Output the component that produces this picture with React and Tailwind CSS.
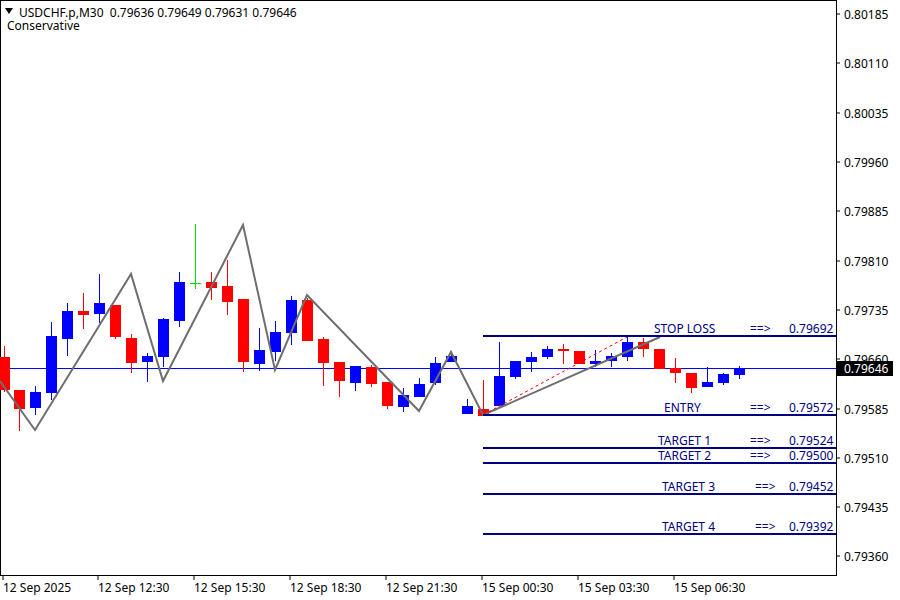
const C=[
[4,'r',357,390,346,392],[19,'r',390,409,390,431],[35,'b',392,408,386,415],[51,'b',336,393,322,400],
[67,'b',311,339,303,356],[83,'r',311,315,293,329],[99,'b',303,314,274,323],[115,'r',305,337,305,339],
[131,'r',338,363,334,373],[147,'b',356,362,353,382],[163,'b',319,357,318,367],[179,'b',282,321,272,327],
[195,'g',283,284,224,289],[211,'r',282,288,272,300],[227,'r',286,302,260,315],[243,'r',299,362,299,372],
[259,'b',350,364,328,371],[275,'b',332,352,321,361],[291,'b',300,333,296,345],[307,'r',300,341,298,341],
[323,'r',339,363,337,386],[339,'r',362,381,362,397],[355,'b',366,383,366,391],[371,'r',367,384,365,387],
[387,'r',382,406,382,409],[403,'b',395,407,388,412],[419,'b',384,397,378,397],[435,'b',363,383,357,385],
[451,'b',356,362,352,362],[467,'b',406,414,399,414],[483,'r',409,416,380,416],[499,'b',376,406,342,406],
[515,'b',361,377,361,379],[531,'b',357,362,352,372],[547,'b',349,357,346,359],[563,'r',349,351,344,364],
[579,'r',351,364,351,364],[595,'b',361,364,350,367],[611,'b',356,361,353,367],[627,'b',342,357,337,361],
[643,'r',342,349,338,357],[659,'r',349,369,349,369],[675,'r',368,373,358,383],[691,'r',373,388,373,393],
[707,'b',382,387,367,387],[723,'b',374,383,373,385],[739,'b',369,375,366,379]];
const col={r:'#ff0000',b:'#0000ff',g:'#00e000'};
const levels=[['STOP LOSS',654,750,'0.79692',336],['ENTRY',664,750,'0.79572',415],['TARGET 1',658,750,'0.79524',448],['TARGET 2',658,750,'0.79500',463],['TARGET 3',662,755,'0.79452',494],['TARGET 4',662,755,'0.79392',534]];
const prices=[['0.80185',14],['0.80110',63],['0.80035',113],['0.79960',162],['0.79885',211],['0.79810',261],['0.79735',310],['0.79660',359],['0.79585',409],['0.79510',458],['0.79435',507],['0.79360',556]];
const times=[['12 Sep 2025',3],['12 Sep 12:30',98],['12 Sep 15:30',194],['12 Sep 18:30',290],['12 Sep 21:30',386],['15 Sep 00:30',482],['15 Sep 03:30',578],['15 Sep 06:30',674]];
export default function App(){
return(<div className="w-[900px] h-[600px] bg-white overflow-hidden font-['Liberation_Sans',Arial,sans-serif]">
<svg width="900" height="600" className="block">
<rect x="0.5" y="0.5" width="836" height="575" fill="none" stroke="#000"/>
<line x1="0" y1="368.5" x2="836" y2="368.5" stroke="#0000ff"/>
{C.map(([x,c,t,b,h,l],i)=>c==='g'?<g key={i}><line x1={x+.5} y1={h} x2={x+.5} y2={l} stroke={col.g}/><line x1={x-5} y1={283.5} x2={x+6} y2={283.5} stroke={col.g}/></g>:
<g key={i}><line x1={x+.5} y1={h} x2={x+.5} y2={l} stroke={col[c]}/><rect x={x-5} y={t} width="11" height={Math.max(b-t,2)} fill={col[c]}/></g>)}
<polyline points="0,381 35,430 131,274 163,381 243,225 275,370 307,295 419,411 451,352 483,415 660,337" fill="none" stroke="#6e6e6e" strokeWidth="2"/>
<line x1="483" y1="415" x2="627" y2="337" stroke="#ff0000" strokeDasharray="3,3"/>
{levels.map(([n,x,ax,p,y])=>(<g key={n}><line x1="483" y1={y} x2="836" y2={y} stroke="#000080" strokeWidth="2"/>
<text x={x} y={y-3} fill="#000080" fontSize="12">{n}</text>
<text x={ax} y={y-3} fill="#000080" fontSize="12">==&gt;</text>
<text x="789" y={y-3} fill="#000080" fontSize="12">{p}</text></g>))}
{prices.map(([p,y])=>(<g key={p}><line x1="836" y1={y} x2="840" y2={y} stroke="#000"/><text x="844" y={y+5} fontSize="12" fill="#000">{p}</text></g>))}
<rect x="837" y="361" width="56" height="15" fill="#000"/>
<text x="844" y="373" fontSize="12" fill="#fff">0.79646</text>
{times.map(([t,x])=>(<g key={t}><line x1={x} y1="575" x2={x} y2="580" stroke="#000"/><text x={x} y="592" fontSize="12" fill="#000">{t}</text></g>))}
<polygon points="5,8 13,8 9,14" fill="#000"/>
<text x="19" y="17" fontSize="12" fill="#000" xmlSpace="preserve">USDCHF.p,M30  0.79636 0.79649 0.79631 0.79646</text>
<text x="7" y="30" fontSize="12" fill="#000">Conservative</text>
</svg>
</div>);}
